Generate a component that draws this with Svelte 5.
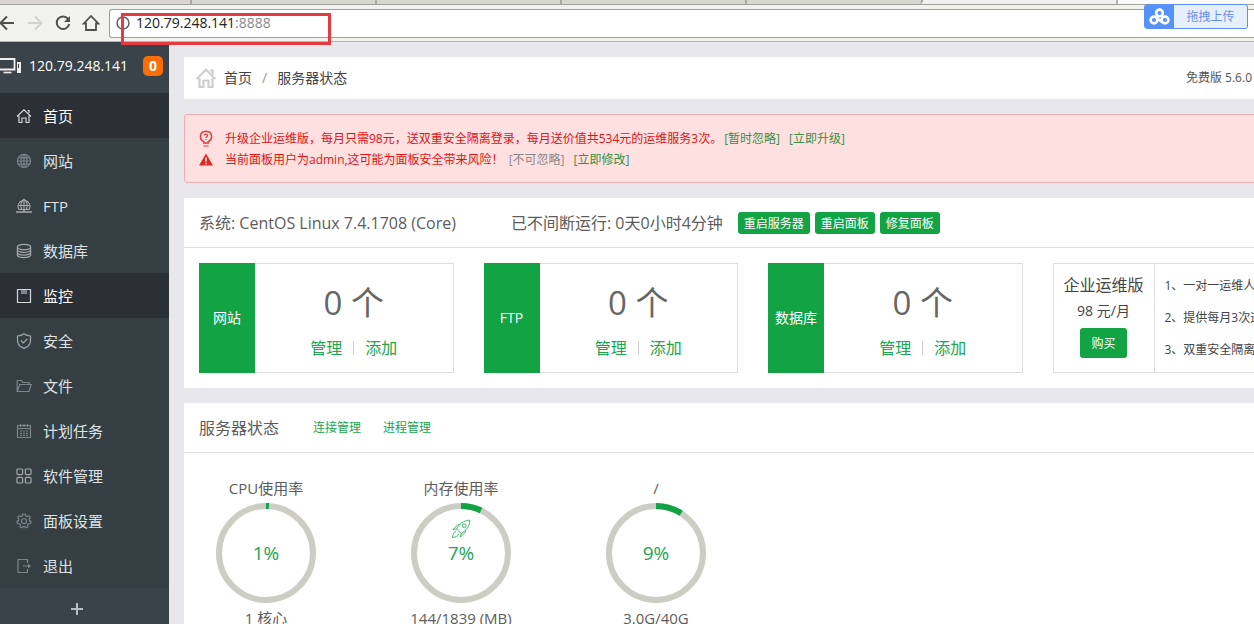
<script>
  const menu = [
    { label: '首页', icon: 'home', active: true },
    { label: '网站', icon: 'globe', dim: true },
    { label: 'FTP', icon: 'ftp' },
    { label: '数据库', icon: 'database' },
    { label: '监控', icon: 'monitor', active: true },
    { label: '安全', icon: 'shield' },
    { label: '文件', icon: 'folder', dim: true },
    { label: '计划任务', icon: 'calendar', dim: true },
    { label: '软件管理', icon: 'grid' },
    { label: '面板设置', icon: 'gear', dim: true },
    { label: '退出', icon: 'exit', dim: true }
  ];

  const counters = [
    { label: '网站', count: 0 },
    { label: 'FTP', count: 0 },
    { label: '数据库', count: 0 }
  ];

  const gauges = [
    { title: 'CPU使用率', percent: 1, detail: '1 核心' },
    { title: '内存使用率', percent: 7, detail: '144/1839 (MB)', rocket: true },
    { title: '/', percent: 9, detail: '3.0G/40G' }
  ];

  const features = ['1、一对一运维人', '2、提供每月3次运', '3、双重安全隔离'];

  let address = $state('120.79.248.141:8888');
</script>

<div class="window">
  <header class="browser">
    <div class="tabs">
      <span class="tab first"></span>
      <span class="tab"></span>
      <span class="tab"></span>
      <span class="tab"></span>
      <span class="tab last"></span>
      <span class="tab current"></span>
    </div>
    <div class="toolbar">
      <button type="button" class="nav" aria-label="Back">
        <svg width="18" height="18" viewBox="0 0 18 18" fill="none" stroke="#505050" stroke-width="2"><path d="M16 9H3M9 2.5L2.5 9L9 15.5" /></svg>
      </button>
      <button type="button" class="nav" aria-label="Forward" disabled>
        <svg width="18" height="18" viewBox="0 0 18 18" fill="none" stroke="#d2d2d0" stroke-width="2"><path d="M2 9h13M9 2.5L15.5 9L9 15.5" /></svg>
      </button>
      <button type="button" class="nav" aria-label="Reload">
        <svg width="18" height="18" viewBox="0 0 18 18" fill="none" stroke="#505050" stroke-width="2"><path d="M14 4.8A6.3 6.3 0 1 0 15.2 10" /><path d="M16 2v6h-6z" fill="#505050" stroke="none" /></svg>
      </button>
      <button type="button" class="nav" aria-label="Home">
        <svg width="18" height="18" viewBox="0 0 18 18" fill="none" stroke="#505050" stroke-width="1.8"><path d="M1.8 9.5L9 2l7.2 7.5H14V16H4V9.5z" /></svg>
      </button>
      <label class="address">
        <svg width="14" height="14" viewBox="0 0 14 14" fill="none" stroke="#606060" stroke-width="1.5"><circle cx="7" cy="7" r="6" /><path d="M7 6v4M7 3.6v1.2" /></svg>
        <span class="url">
          <span aria-hidden="true">{address.split(':')[0]}<i>:{address.split(':')[1]}</i></span>
          <input type="text" aria-label="Address" bind:value={address} />
        </span>
      </label>
    </div>
    <div class="marker"></div>
    <button type="button" class="upload">
      <span class="upload-icon">
        <svg width="21" height="18" viewBox="0 0 21 18" fill="none" stroke="#fff" stroke-width="2.6"><circle cx="10.5" cy="5" r="3.4" /><circle cx="5" cy="12" r="3.4" /><circle cx="16" cy="12" r="3.4" /><path d="M8 10L13 14.2" /></svg>
      </span>
      <span class="upload-text">拖拽上传</span>
    </button>
  </header>

  <div class="layout">
    <aside class="sidebar">
      <div class="server">
        <svg width="21" height="16" viewBox="0 0 21 16" fill="none" stroke="#eee"><path d="M0 1h14.5v10.5H0" stroke-width="1.8" /><path d="M3.5 14.5h8" stroke-width="1.6" /><path d="M17 4h4v11h-4z" fill="#eee" stroke="none" /><path d="M18.5 6v4" stroke="#3c444d" /></svg>
        <span class="ip">120.79.248.141</span>
        <span class="badge">0</span>
      </div>
      <nav>
        {#each menu as item}
          <a href="#top" class:active={item.active}>
            <svg class:dim={item.dim} width="16" height="16" viewBox="0 0 16 16" fill="none" stroke="currentColor" stroke-width="1.2">
              {#if item.icon === 'home'}
                <path d="M1 8.5L8 1.8L15 8.5M3 7.5V14.5H6V10H10V14.5H13V7.5M11.5 2.5H13V5" />
              {:else if item.icon === 'globe'}
                <circle cx="8" cy="8" r="6.6" /><ellipse cx="8" cy="8" rx="3" ry="6.6" /><path d="M8 1.4v13.2M1.4 8h13.2M2.3 4.8h11.4M2.3 11.2h11.4" />
              {:else if item.icon === 'ftp'}
                <path d="M3 11.5A5.9 5.9 0 1 1 13 11.5zM8 1.2v10.3M2.2 7.5h11.6M5.5 11.5C4 7 5 3.5 8 1.2C11 3.5 12 7 10.5 11.5" /><path d="M0 14H16M8 11.5V14" stroke-width="1.6" />
              {:else if item.icon === 'database'}
                <ellipse cx="8" cy="4" rx="6.6" ry="2.7" /><path d="M1.4 4v8c0 3.4 13.2 3.4 13.2 0V4M1.4 6.8c0 3.4 13.2 3.4 13.2 0M1.4 9.5c0 3.4 13.2 3.4 13.2 0" />
              {:else if item.icon === 'monitor'}
                <path d="M1.5 1.5h13v13h-13z" /><path d="M5 2h6v4H5z" fill="#80878a" stroke="none" />
              {:else if item.icon === 'shield'}
                <path d="M8 .8C6 2.4 4 3 1.5 3V8c0 3.5 3 6 6.5 7.4C11.5 14 14.5 11.5 14.5 8V3C12 3 10 2.4 8 .8zM4.8 7.5L7.3 10L11.3 5.8" />
              {:else if item.icon === 'folder'}
                <path d="M1.2 13.5V2.5H5.5L7 4.5H13V6.5M1.2 13.5L3.8 6.5H15.2L13 13.5z" />
              {:else if item.icon === 'calendar'}
                <path d="M1.5 2.5h13v12h-13zM1.5 5.5h13M4.5 1v3M8 1v3M11.5 1v3" /><path d="M4 8h8M4 10.3h8M4 12.5h8" stroke-dasharray="2 1" />
              {:else if item.icon === 'grid'}
                <rect x="1" y="1" width="5.6" height="5.6" rx="1" /><rect x="9.4" y="1" width="5.6" height="5.6" rx="1" /><rect x="1" y="9.4" width="5.6" height="5.6" rx="1" /><rect x="9.4" y="9.4" width="5.6" height="5.6" rx="1" />
              {:else if item.icon === 'gear'}
                <circle cx="8" cy="8" r="2.5" /><path d="M6.7 1h2.6l.5 2 1.3.6 1.9-.9 1.4 1.9-1.3 1.6.3 1.3 1.6.9-.4 2.1-2.1.3-.9 1.2.3 2-2.1.9L8 13.3 6.2 14.9l-2.1-.9.3-2-.9-1.2-2.1-.3L1 8.4l1.6-.9.3-1.3L1.6 4.6 3 2.7l1.9.9L6.2 3z" />
              {:else}
                <path d="M11.500 5V1.500H2V14.500H11.500V11M7 8H14" /><path d="M12 5.500L15 8L12 10.500z" fill="currentColor" stroke="none" />
              {/if}
            </svg>
            <span>{item.label}</span>
          </a>
        {/each}
      </nav>
      <button type="button" class="add" aria-label="添加">
        <svg width="12" height="12" viewBox="0 0 12 12" stroke="#b9bcc0" stroke-width="2"><path d="M0 6h12M6 0v12" /></svg>
      </button>
    </aside>

    <main>
      <div class="content" id="top">
        <div class="panel crumbs">
          <svg width="22" height="22" viewBox="0 0 22 22" fill="none" stroke="#cfcfcf" stroke-width="2.2"><path d="M1.5 12L11 2.8L20.5 12M4.5 11V20H8.5V13.5H13.5V20H17.5V11" /><path d="M15 3.500h2.500V8" /></svg>
          <a href="#top">首页</a>
          <span class="slash">/</span>
          <span>服务器状态</span>
          <span class="version">免费版 5.6.0</span>
        </div>

        <div class="alert">
          <p>
            <svg width="16" height="18" viewBox="0 0 16 18" fill="none" stroke="#e03a35" stroke-width="1.5"><path d="M5.8 13V11.6C1 9.5 1 1.5 8 1.3C15 1.5 15 9.500 10.200 11.600V13z" /><path d="M5.500 16h5M6.400 5.500C6.400 3.600 9.600 3.600 9.600 5.500C9.600 6.700 8 6.700 8 8M8 9v1" stroke-width="1.2" /></svg>
            <span>升级企业运维版，每月只需98元，送双重安全隔离登录，每月送价值共534元的运维服务3次。</span><a href="#top" class="first">[暂时忽略]</a><a href="#top">[立即升级]</a>
          </p>
          <p>
            <svg width="16" height="16" viewBox="0 0 16 16"><path d="M8 1.5L15 13.5H1z" fill="#d92c25" /><path d="M8 5.5v4M8 10.8v1.500" stroke="#fdd" stroke-width="1.6" /></svg>
            <span>当前面板用户为admin,这可能为面板安全带来风险！</span><a href="#top" class="first muted">[不可忽略]</a><a href="#top">[立即修改]</a>
          </p>
        </div>

        <section class="panel">
          <div class="head">
            <span class="system">系统: CentOS Linux 7.4.1708 (Core)</span>
            <span>已不间断运行: 0天0小时4分钟</span>
            <div class="actions">
              <button type="button">重启服务器</button>
              <button type="button">重启面板</button>
              <button type="button">修复面板</button>
            </div>
          </div>
          <div class="cards">
            {#each counters as item}
              <div class="card">
                <div class="card-label">{item.label}</div>
                <div class="card-body">
                  <div class="count">{item.count} 个</div>
                  <div class="links">
                    <a href="#top">管理</a>
                    <span class="bar"></span>
                    <a href="#top">添加</a>
                  </div>
                </div>
              </div>
            {/each}
            <div class="card">
              <div class="plan">
                <span class="plan-name">企业运维版</span>
                <span class="price">98 元/月</span>
                <button type="button">购买</button>
              </div>
              <ul>
                {#each features as feature}
                  <li>{feature}</li>
                {/each}
              </ul>
            </div>
          </div>
        </section>

        <section class="panel">
          <div class="head status">
            <span>服务器状态</span>
            <a href="#top">连接管理</a>
            <a href="#top">进程管理</a>
          </div>
          <div class="gauges">
            {#each gauges as gauge}
              <div class="gauge">
                <div class="gauge-title">{gauge.title}</div>
                <div class="ring">
                  <svg width="100" height="100" viewBox="0 0 100 100" fill="none" stroke-width="6">
                    <circle cx="50" cy="50" r="47" stroke="#cdcdc5" />
                    <circle cx="50" cy="50" r="47" stroke="#12a345" pathLength="100" stroke-dasharray="{gauge.percent} 100" transform="rotate(-90 50 50)" />
                  </svg>
                  {#if gauge.rocket}
                    <svg class="rocket" width="20" height="20" viewBox="0 0 20 20" fill="none" stroke="#3fb873" stroke-width="1"><path d="M5.5 10C8 5 12.5 1.5 18.8 1.2C19 7 15 12 10 14.5zM5.5 10L2 10.5L7 5.5L8.5 6M10 14.5L9.5 18L14.5 13L14 11.5M5 12.5C2.5 13 2 15.5 1.5 18.5C4.5 18 7 17.5 7.5 15" /><circle cx="13.3" cy="6.7" r="1.9" /></svg>
                  {/if}
                  <span class="percent">{gauge.percent}%</span>
                </div>
                <div class="gauge-detail">{gauge.detail}</div>
              </div>
            {/each}
          </div>
        </section>
      </div>
    </main>
  </div>
</div>

<style>
  :global(body) {
    background: #e8e8ec;
    overflow: hidden;
  }

  .window {
    display: flex;
    flex-direction: column;
    height: 100vh;
    overflow: hidden;
    color: #5c5c5c;
    font-family: "Open Sans", "Noto Sans CJK SC", sans-serif;
    font-size: 14px;
    line-height: 20px;
  }

  button,
  input {
    font-family: inherit;
    border: none;
    padding: 0;
    margin: 0;
  }

  button {
    cursor: pointer;
  }

  a {
    color: #20a550;
    text-decoration: none;
  }

  svg {
    flex: none;
  }

  .browser {
    position: relative;
    flex: none;
    background: #f2f2ef;
    border-bottom: 1px solid #b4b4b4;
  }

  .tabs {
    display: flex;
    height: 4px;
    background: #f0f0f0;
    border-bottom: 1px solid #a0a09c;
  }

  .tab {
    flex: 0 0 185px;
    border-right: 2px solid #a8a8a2;
    background: #d6d7ce;
    box-sizing: border-box;
  }

  .tab.first {
    flex-basis: 192px;
    background: #dad6d2;
  }

  .tab.last {
    flex-basis: 176px;
    border-radius: 0 0 4px 0;
  }

  .tab.current {
    flex: 1;
    margin-left: 193px;
    background: #fafafa;
    border-right: none;
    border-left: 2px solid #b4b4b4;
  }

  .toolbar {
    display: flex;
    align-items: center;
    height: 36px;
  }

  .nav {
    display: flex;
    justify-content: center;
    width: 28px;
    background: none;
  }

  .nav:first-child {
    margin-left: -7px;
  }

  .address {
    display: flex;
    align-items: center;
    flex: 1;
    gap: 6px;
    height: 27px;
    margin-left: 4px;
    padding-left: 6px;
    background: #fff;
    border: 1px solid #a0a0a0;
    border-right: none;
    border-radius: 3px 0 0 3px;
  }

  .url {
    position: relative;
    flex: 1;
    height: 20px;
    color: #222;
  }

  .url i {
    color: #888;
    font-style: normal;
  }

  .url input {
    position: absolute;
    inset: 0;
    width: 100%;
    background: transparent;
    color: transparent;
    caret-color: #222;
    font-size: 14px;
    outline: none;
  }

  .marker {
    position: absolute;
    left: 121px;
    top: 13px;
    width: 204px;
    height: 26px;
    border: 3px solid #e33b41;
    pointer-events: none;
  }

  .upload {
    position: absolute;
    right: 6px;
    top: 4px;
    display: flex;
    height: 25px;
    border: 1px solid #5b8ff0;
    border-radius: 3px;
    background: #e6f0fd;
    overflow: hidden;
    color: #6a90ee;
    font-size: 12px;
    line-height: 23px;
  }

  .upload-icon {
    display: flex;
    align-items: center;
    justify-content: center;
    width: 29px;
    height: 23px;
    background: #5292fa;
  }

  .upload-text {
    width: 73px;
  }

  .layout {
    display: flex;
    flex: 1;
    min-height: 0;
  }

  .sidebar {
    display: flex;
    flex-direction: column;
    flex: 0 0 169px;
    background: #353f43;
  }

  .server {
    display: flex;
    align-items: center;
    flex: none;
    height: 51px;
    padding-bottom: 3px;
    box-sizing: border-box;
    background: #3b434a;
    color: #fff;
  }

  .ip {
    margin-left: 8px;
  }

  .badge {
    width: 20px;
    margin: 0 6px 0 auto;
    border-radius: 5px;
    background: #fc6d06;
    font-weight: bold;
    text-align: center;
  }

  nav a {
    display: flex;
    align-items: center;
    gap: 11px;
    height: 45px;
    padding-left: 16px;
    color: #dfe1e2;
    font-size: 15px;
  }

  nav a.active {
    background: #2b3036;
    color: #fff;
  }

  nav svg {
    color: #a5a9ab;
  }

  nav .active svg {
    color: #d5d6d7;
  }

  nav svg.dim {
    color: #7d8487;
  }

  .add {
    display: flex;
    align-items: center;
    justify-content: center;
    flex: none;
    height: 42px;
    padding-right: 16px;
    background: #3b434a;
  }

  main {
    flex: 1;
    min-width: 0;
    overflow: hidden;
    background: #e8e8ec;
  }

  .content {
    display: flex;
    flex-direction: column;
    gap: 15px;
    min-width: 1138px;
    padding: 15px;
  }

  .panel {
    background: #fff;
  }

  .crumbs {
    display: flex;
    align-items: center;
    height: 42px;
    padding: 0 70px 0 11px;
    color: #444;
  }

  .crumbs a {
    margin-left: 7px;
    color: #444;
  }

  .slash {
    margin: 0 10px;
    color: #999;
  }

  .version {
    margin-left: auto;
    color: #555;
    font-size: 12px;
  }

  .alert {
    padding: 13px 13px 12px;
    border: 1px solid #eeb0b0;
    border-radius: 3px;
    background: #ffe0e0;
    color: #dc1414;
    font-size: 12px;
    line-height: 21px;
  }

  .alert p {
    display: flex;
    align-items: center;
    height: 21px;
    margin: 0;
  }

  .alert span {
    margin-left: 11px;
  }

  .alert a {
    margin-right: 9px;
    color: #388f45;
  }

  .alert .first {
    margin-left: 2px;
  }

  .alert .muted {
    margin-left: 5px;
    color: #888;
  }

  .head {
    display: flex;
    align-items: center;
    height: 49px;
    padding: 0 15px;
    border-bottom: 1px solid #ddd;
    font-size: 16px;
  }

  .system {
    margin-right: 55px;
  }

  .actions {
    display: flex;
    gap: 5px;
    margin-left: 15px;
  }

  .actions button,
  .plan button {
    height: 22px;
    padding: 0 6px;
    border-radius: 3px;
    background: #12a345;
    color: #fff;
    font-size: 12px;
  }

  .cards {
    display: grid;
    grid-template-columns: repeat(4, 1fr);
    gap: 30px;
    padding: 15px;
  }

  .card {
    display: flex;
    height: 110px;
    border: 1px solid #ddd;
    box-sizing: border-box;
  }

  .card-label {
    display: flex;
    align-items: center;
    justify-content: center;
    width: 56px;
    margin: -1px 0 -1px -1px;
    background: #12a345;
    color: #fff;
  }

  .card-body {
    display: flex;
    flex-direction: column;
    align-items: center;
    flex: 1;
    padding-top: 15px;
  }

  .count {
    color: #666;
    font-size: 33px;
    line-height: 48px;
  }

  .links {
    display: flex;
    align-items: center;
    gap: 11px;
    padding-top: 11px;
    font-size: 16px;
  }

  .bar {
    width: 1px;
    height: 14px;
    background: #ccc;
  }

  .plan {
    display: flex;
    flex-direction: column;
    align-items: center;
    flex: 0 0 100px;
    padding-top: 8px;
    border-right: 1px solid #ddd;
    color: #444;
    line-height: 26px;
  }

  .plan-name {
    font-size: 16px;
  }

  .plan button {
    height: 30px;
    margin-top: 4px;
    padding: 0 11px;
  }

  ul {
    flex: 1;
    margin: 0;
    padding: 6px 0 0 10px;
    color: #444;
    font-size: 12px;
    line-height: 32px;
    list-style: none;
    white-space: nowrap;
  }

  .status a {
    margin-left: 22px;
    font-size: 12px;
  }

  .status span + a {
    margin-left: 34px;
  }

  .gauges {
    display: flex;
    padding: 25px 0 15px;
    font-size: 15px;
  }

  .gauge {
    display: flex;
    flex-direction: column;
    align-items: center;
    flex: 0 0 164px;
    margin-right: 31px;
  }

  .ring {
    position: relative;
    display: flex;
    margin: 5px 0;
  }

  .percent {
    position: absolute;
    inset: 0;
    color: #20a550;
    font-size: 19px;
    line-height: 100px;
    text-align: center;
  }

  .rocket {
    position: absolute;
    left: 40px;
    top: 16px;
  }
</style>
